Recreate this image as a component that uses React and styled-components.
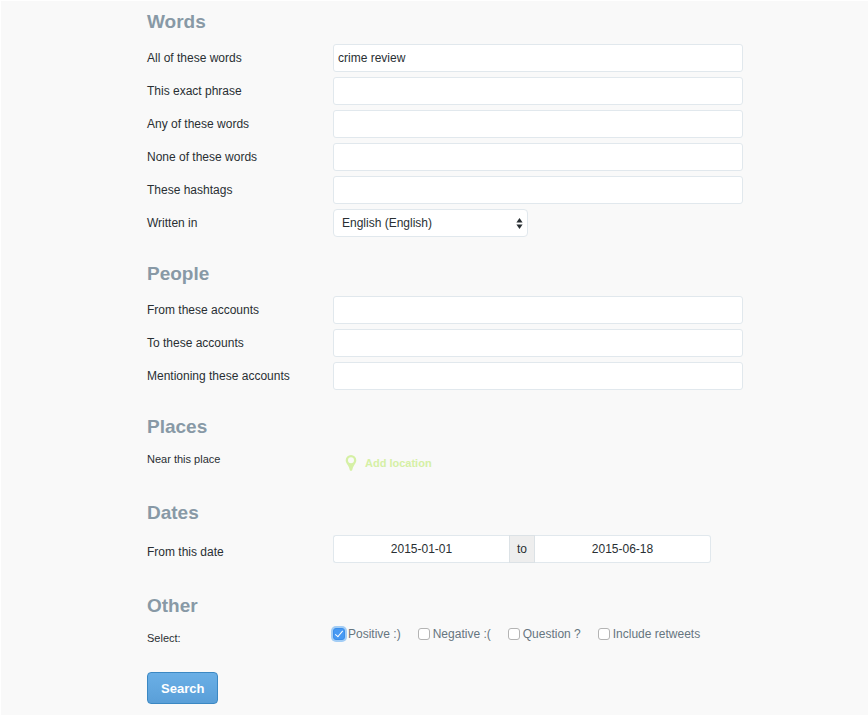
import React, { useState } from 'react';
import styled, { createGlobalStyle } from 'styled-components';

const GlobalStyle = createGlobalStyle`
  * {
    box-sizing: border-box;
  }

  body {
    margin: 0;
    background: #f9f9f9;
    color: #292f33;
    font-family: "Liberation Sans", Arial, sans-serif;
    font-size: 12px;
  }
`;

const Page = styled.main`
  min-height: 100vh;
  padding: 8px 125px 12px 146px;
  border-top: 1px solid #ffffff;
  border-left: 1px solid #ffffff;

  @media only screen and (max-width: 640px) {
    padding: 8px 16px 12px;
  }
`;

const Form = styled.form`
  display: flex;
  flex-direction: column;
  align-items: flex-start;
  gap: 24px;
  max-width: 640px;
`;

const Section = styled.section`
  width: 100%;
`;

const Heading = styled.h2`
  margin: 0 0 10px;
  color: #8899a6;
  font-size: 19px;
  font-weight: bold;
  line-height: 25px;
`;

const Rows = styled.div`
  display: flex;
  flex-direction: column;
  gap: 5px;
`;

const Row = styled.div`
  display: grid;
  grid-template-columns: 186px minmax(0, 1fr);
  min-height: ${(props) => (props.$tall ? '34px' : '20px')};
  align-items: ${(props) => (props.$top ? 'start' : 'center')};

  @media only screen and (max-width: 480px) {
    grid-template-columns: 1fr;
    gap: 4px;
  }
`;

const Label = styled.label`
  color: #292f33;
  font-size: ${(props) => (props.$small ? '11px' : '12px')};
  line-height: 20px;
`;

const TextInput = styled.input`
  width: 100%;
  min-width: 0;
  height: 28px;
  padding: 0 4px;
  border: 1px solid #e1e8ed;
  border-radius: 3px;
  background: #ffffff;
  color: #292f33;
  font: inherit;
`;

const SelectBox = styled.div`
  display: grid;
  align-items: center;
  width: 195px;

  > * {
    grid-area: 1 / 1;
  }

  svg {
    justify-self: end;
    margin-right: 5px;
    pointer-events: none;
  }
`;

const Select = styled.select`
  appearance: none;
  width: 100%;
  height: 28px;
  padding: 0 20px 0 8px;
  border: 1px solid #e1e8ed;
  border-radius: 4px;
  background: #ffffff;
  color: #292f33;
  font: inherit;
`;

const LocationButton = styled.button`
  display: flex;
  align-items: center;
  justify-self: start;
  gap: 8px;
  height: 27px;
  padding: 0 12px;
  border: none;
  background: transparent;
  color: #d5f0a5;
  font: bold 11px "Liberation Sans", Arial, sans-serif;
  cursor: pointer;
`;

const DateRange = styled.div`
  display: flex;
  align-self: start;
  max-width: 378px;
`;

const DateInput = styled(TextInput)`
  flex: 1;
  text-align: center;
  border-radius: ${(props) => (props.$end ? '0 3px 3px 0' : '3px 0 0 3px')};
  border-left-width: ${(props) => (props.$end ? '0' : '1px')};
  border-right-width: ${(props) => (props.$end ? '1px' : '0')};
`;

const DateJoin = styled.label`
  flex: none;
  width: 26px;
  border: 1px solid #dce2e6;
  background: #eeeeee;
  line-height: 26px;
  text-align: center;
`;

const Options = styled.div`
  display: flex;
  flex-wrap: wrap;
  gap: 8px 17px;
`;

const Option = styled.label`
  display: flex;
  align-items: center;
  gap: 3px;
  color: #66757f;
  line-height: 12px;
`;

const Checkbox = styled.input`
  appearance: none;
  display: grid;
  place-items: center;
  width: 12px;
  height: 12px;
  margin: 0;
  border: 1px solid #b4b4b4;
  border-radius: 3px;
  background: #ffffff;

  &:checked {
    border-color: #3b8eea;
    background: #4799f3;
    box-shadow: 0 0 0 2px #a3cdf5;
  }

  &:checked::after {
    content: "";
    box-sizing: border-box;
    width: 4px;
    height: 8px;
    margin-bottom: 2px;
    border: solid #ffffff;
    border-width: 0 1px 1px 0;
    transform: rotate(40deg);
  }
`;

const SearchButton = styled.button`
  height: 32px;
  padding: 0 13px;
  border: 1px solid #3b88c3;
  border-radius: 4px;
  background: linear-gradient(#6aafe6, #5a9fd8);
  color: #ffffff;
  font: bold 13px "Liberation Sans", Arial, sans-serif;
  cursor: pointer;
`;

const wordFields = [
  { id: 'all', label: 'All of these words', value: 'crime review' },
  { id: 'exact', label: 'This exact phrase' },
  { id: 'any', label: 'Any of these words' },
  { id: 'none', label: 'None of these words' },
  { id: 'hashtags', label: 'These hashtags' },
];

const peopleFields = [
  { id: 'from', label: 'From these accounts' },
  { id: 'to', label: 'To these accounts' },
  { id: 'mentioning', label: 'Mentioning these accounts' },
];

const filters = [
  { id: 'positive', label: 'Positive :)' },
  { id: 'negative', label: 'Negative :(' },
  { id: 'question', label: 'Question ?' },
  { id: 'retweets', label: 'Include retweets' },
];

const Field = ({ id, label, value }) => (
  <Row>
    <Label htmlFor={id}>{label}</Label>
    <TextInput id={id} name={id} type="text" defaultValue={value} />
  </Row>
);

const Arrows = () => (
  <svg width="7" height="11" viewBox="0 0 7 11" fill="#292f33" aria-hidden="true">
    <path d="M3.5 0 6.6 4.6H0.4z" />
    <path d="M3.5 11 0.4 6.4h6.2z" />
  </svg>
);

const Pin = () => (
  <svg width="12" height="16" viewBox="0 0 12 16" fill="currentColor" aria-hidden="true">
    <path
      fillRule="evenodd"
      d="M6 0a5.3 5.3 0 0 0-5.3 5.3c0 2.2 1.2 3.6 2.3 5.3.8 1.2 1.4 2.5 1.7 4.2.1.7.5 1.2 1.3 1.2s1.2-.5 1.3-1.2c.3-1.7.9-3 1.7-4.2 1.1-1.7 2.3-3.1 2.3-5.3A5.3 5.3 0 0 0 6 0zm0 2.3a3 3 0 1 1 0 6 3 3 0 0 1 0-6z"
    />
  </svg>
);

export default () => {
  const [checked, setChecked] = useState({ positive: true });

  const toggle = (id) => {
    setChecked({ ...checked, [id]: !checked[id] });
  };

  return (
    <>
      <GlobalStyle />
      <Page>
        <Form onSubmit={(e) => e.preventDefault()}>
          <Section>
            <Heading>Words</Heading>
            <Rows>
              {wordFields.map((field) => <Field key={field.id} {...field} />)}
              <Row>
                <Label htmlFor="lang">Written in</Label>
                <SelectBox>
                  <Select id="lang" name="lang" defaultValue="en">
                    <option value="en">English (English)</option>
                  </Select>
                  <Arrows />
                </SelectBox>
              </Row>
            </Rows>
          </Section>

          <Section>
            <Heading>People</Heading>
            <Rows>
              {peopleFields.map((field) => <Field key={field.id} {...field} />)}
            </Rows>
          </Section>

          <Section>
            <Heading>Places</Heading>
            <Row $top>
              <Label as="span" $small>Near this place</Label>
              <LocationButton type="button">
                <Pin />
                Add location
              </LocationButton>
            </Row>
          </Section>

          <Section>
            <Heading>Dates</Heading>
            <Row $tall>
              <Label htmlFor="since">From this date</Label>
              <DateRange>
                <DateInput id="since" name="since" type="text" defaultValue="2015-01-01" />
                <DateJoin htmlFor="until">to</DateJoin>
                <DateInput id="until" name="until" type="text" defaultValue="2015-06-18" $end />
              </DateRange>
            </Row>
          </Section>

          <Section>
            <Heading>Other</Heading>
            <Row $top>
              <Label as="span" $small>Select:</Label>
              <Options>
                {filters.map(({ id, label }) => (
                  <Option key={id}>
                    <Checkbox
                      type="checkbox"
                      name={id}
                      checked={!!checked[id]}
                      onChange={() => toggle(id)}
                    />
                    {label}
                  </Option>
                ))}
              </Options>
            </Row>
          </Section>

          <SearchButton type="submit">Search</SearchButton>
        </Form>
      </Page>
    </>
  );
};
